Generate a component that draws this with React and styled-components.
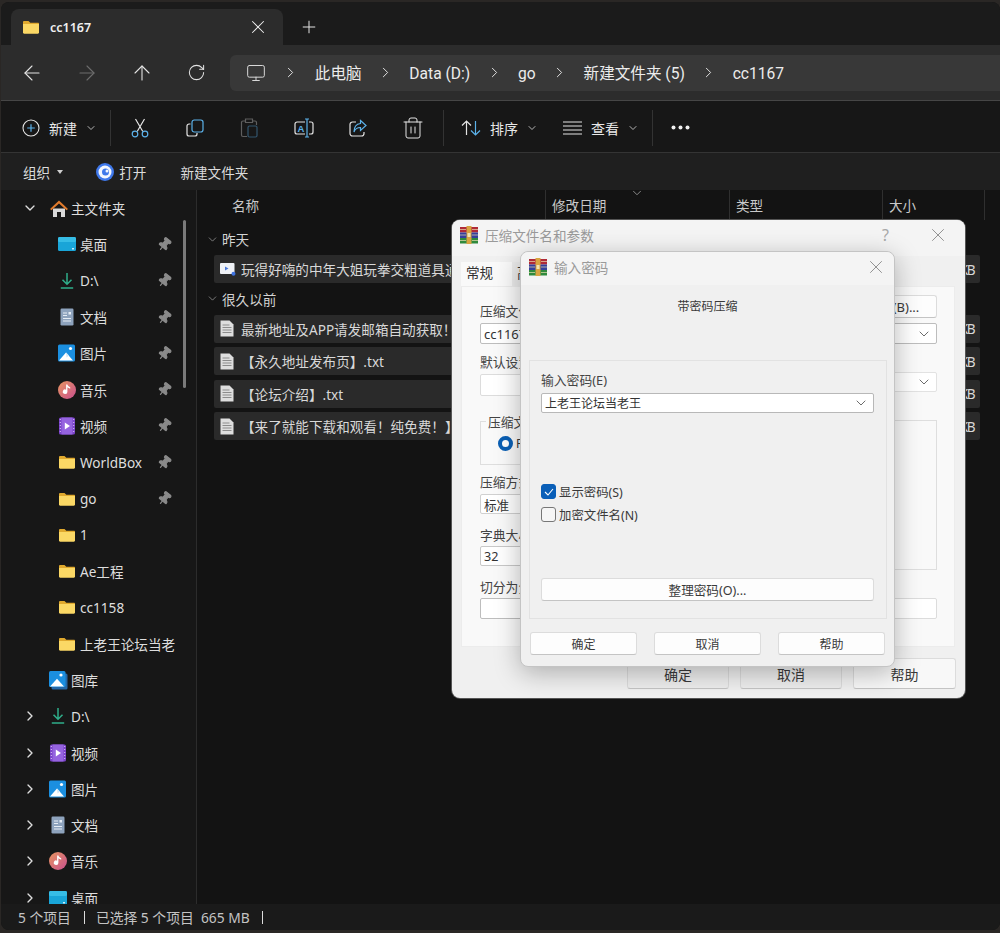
import { Fragment } from "react";
import styled, { createGlobalStyle } from "styled-components";
import {
  ArrowLeft,
  ArrowRight,
  ArrowUp,
  ChevronDown,
  ChevronRight,
  Monitor,
  Pin,
  Plus,
  RotateCw,
  Trash2,
  X,
} from "lucide-react";

const GlobalStyle = createGlobalStyle`
  html, body {
    margin: 0;
    background: #2a2725;
    font-family: "Noto Sans", "Noto Sans CJK SC", sans-serif;
  }
  * { box-sizing: border-box; }
`;

const Page = styled.div`
  width: 1000px;
  height: 933px;
  padding: 2px 0 0 1px;
  overflow: hidden;
`;
const Window = styled.div`
  position: relative;
  width: 999px;
  height: 928px;
  display: flex;
  flex-direction: column;
  border-radius: 8px;
  overflow: hidden;
  background: #141414;
  color: #e4e4e4;
`;

/* tabs */
const TabStrip = styled.div`
  height: 43px;
  flex: none;
  display: flex;
  align-items: flex-end;
  padding-left: 10px;
  background: #1b1b1b;
`;
const Tab = styled.div`
  width: 272px;
  height: 36px;
  display: flex;
  align-items: center;
  padding: 0 14px 0 11px;
  background: #2c2c2c;
  border-radius: 8px 8px 0 0;
  font-size: 12.5px;
  font-weight: 600;
  color: #f0f0f0;
`;
const TabTitle = styled.span`
  flex: 1;
  margin-left: 10px;
`;
const NewTab = styled.div`
  width: 52px;
  height: 36px;
  display: flex;
  align-items: center;
  justify-content: center;
`;

/* address row */
const AddressRow = styled.div`
  height: 56px;
  flex: none;
  display: flex;
  align-items: center;
  background: #2c2c2c;
  border-bottom: 1px solid #464646;
`;
const NavButton = styled.div`
  width: 55px;
  height: 32px;
  flex: none;
  display: flex;
  align-items: center;
  justify-content: center;
  color: ${(p) => (p.$disabled ? "#6c6c6c" : "#e2e2e2")};
`;
const NavGroup = styled.div`
  display: flex;
  padding-left: 3px;
  margin-right: 6px;
`;
const AddressField = styled.div`
  flex: 1;
  height: 36px;
  display: flex;
  align-items: center;
  gap: 15.4px;
  padding-left: 14px;
  background: #383838;
  border-radius: 6px 0 0 6px;
  font-family: Roboto, "Noto Sans CJK SC", sans-serif;
  font-size: 15.6px;
  color: #ececec;
`;
const Crumb = styled.span`
  display: block;
  line-height: 20px;
  height: 20px;
  padding-top: 1px;
`;
const CrumbIcon = styled.div`
  width: 23px;
  display: flex;
  justify-content: center;
  color: #d8d8d8;
`;
const CrumbSep = styled(ChevronRight)`
  width: 17px;
  height: 19px;
  flex: none;
`;

/* command bar */
const CommandBar = styled.div`
  height: 52px;
  flex: none;
  display: flex;
  align-items: center;
  padding: 2px 0 0 21px;
  background: #171717;
  border-bottom: 1px solid #343434;
  font-size: 14px;
`;
const CommandLabel = styled.div`
  display: flex;
  align-items: center;
  gap: 9px;
  width: ${(p) => p.$width}px;
  color: #e8e8e8;
`;
const SmallChevron = styled(ChevronDown)`
  width: 12px;
  height: 12px;
  color: #b4b4b4;
  margin-left: -1px;
`;
const CommandDivider = styled.div`
  width: 1px;
  height: 36px;
  margin: 0 ${(p) => p.$right || 0}px 0 ${(p) => p.$left || 0}px;
  background: #333;
`;
const IconButton = styled.div`
  width: 54.5px;
  display: flex;
  justify-content: center;
`;

/* secondary toolbar */
const SubBar = styled.div`
  height: 37px;
  flex: none;
  display: flex;
  align-items: center;
  padding-left: 22px;
  background: #1f1f1f;
  font-size: 13.6px;
  color: #dcdcdc;
`;
const SubItem = styled.div`
  display: flex;
  align-items: center;
  gap: 5px;
  margin-right: ${(p) => p.$gap}px;
`;
const Caret = styled.span`
  width: 0;
  height: 0;
  margin-left: 2px;
  border-left: 3.5px solid transparent;
  border-right: 3.5px solid transparent;
  border-top: 4px solid #cfcfcf;
`;

/* explorer body */
const Body = styled.div`
  flex: 1;
  min-height: 0;
  display: flex;
`;
const Sidebar = styled.div`
  position: relative;
  width: 196px;
  flex: none;
  overflow: hidden;
  background: #171717;
  border-right: 1px solid #2c2c2c;
`;
const Scrollbar = styled.div`
  position: absolute;
  top: 30px;
  left: 182px;
  width: 3px;
  height: 168px;
  border-radius: 2px;
  background: #7a7a7a;
`;
const NavRow = styled.div`
  height: 36.3px;
  display: flex;
  align-items: center;
  padding-left: ${(p) => (p.$child ? 57 : 21)}px;
  font-size: 13.6px;
  color: #dedede;
  white-space: nowrap;
`;
const NavChevron = styled.div`
  width: 27px;
  flex: none;
  display: flex;
  color: #dedede;
`;
const NavIcon = styled.div`
  width: 18px;
  height: 18px;
  flex: none;
  margin-right: 4px;
`;
const NavText = styled.span`
  flex: 1;
`;
const PinSlot = styled.div`
  width: 39px;
  display: flex;
  color: #8a8a8a;
  svg {
    transform: rotate(40deg);
  }
`;

const Main = styled.div`
  flex: 1;
  min-width: 0;
  position: relative;
  background: #131313;
`;
const ColumnHeader = styled.div`
  height: 32px;
  display: flex;
  font-size: 13.6px;
  color: #c9c9c9;
`;
const Column = styled.div`
  width: ${(p) => p.$width}px;
  height: 30px;
  padding: 5px 0 0 ${(p) => p.$pad || 6}px;
  border-right: 1px solid #2f2f2f;
`;
const SortMark = styled(ChevronDown)`
  position: absolute;
  top: -4px;
  left: 433px;
  width: 14px;
  height: 14px;
  color: #a0a0a0;
`;
const GroupLabel = styled.div`
  height: 26px;
  display: flex;
  align-items: center;
  gap: 3px;
  margin: ${(p) => p.$top}px 0 ${(p) => p.$bottom}px 9px;
  font-size: 13.6px;
  color: #d4d4d4;
`;
const GroupChevron = styled(ChevronDown)`
  width: 13px;
  height: 13px;
  color: #9a9a9a;
`;
const FileRow = styled.div`
  width: 766px;
  height: 28px;
  margin: 0 0 4.5px 17px;
  display: flex;
  align-items: center;
  padding: 0 6px 0 6px;
  background: #2a2a2a;
  border-radius: 2px;
  font-size: 13.6px;
  color: #d8d8d8;
  white-space: nowrap;
`;
const FileIconSlot = styled.div`
  width: 14px;
  flex: none;
  display: flex;
`;
const FileName = styled.span`
  flex: 1;
  margin-left: 7px;
  overflow: hidden;
`;
const FileSize = styled.span`
  letter-spacing: -1.5px;
`;

const StatusBar = styled.div`
  height: 26px;
  flex: none;
  display: flex;
  align-items: center;
  padding-left: 17px;
  background: #1a1a1a;
  font-size: 13.8px;
  color: #c4c4c4;
  white-space: pre;
`;
const StatusDivider = styled.span`
  width: 1px;
  height: 13px;
  margin: 0 ${(p) => p.$right}px 0 ${(p) => p.$left}px;
  background: #dcdcdc;
`;

/* dialogs */
const Dialog = styled.div`
  position: absolute;
  display: flex;
  flex-direction: column;
  border-radius: 8px;
  background: #f0f0f0;
  color: #3a3a3a;
`;
const ArchiveDialog = styled(Dialog)`
  top: 218px;
  left: 451px;
  width: 513px;
  height: 478px;
  box-shadow: 0 0 0 1px #555;
`;
const PasswordDialog = styled(Dialog)`
  top: 249px;
  left: 519px;
  width: 375px;
  height: 416px;
  border: 1px solid #c4c4c4;
  box-shadow: 0 6px 26px rgba(0, 0, 0, 0.28);
`;
const TitleBar = styled.div`
  height: ${(p) => p.$height}px;
  flex: none;
  display: flex;
  align-items: center;
  padding: 0 ${(p) => p.$right}px ${(p) => p.$bottom}px ${(p) => p.$left}px;
  background: #f4f4f4;
  border-radius: 8px 8px 0 0;
  font-size: 13.6px;
  color: #9a9a9a;
`;
const TitleText = styled.span`
  flex: 1;
  margin-left: 7px;
`;
const HelpMark = styled.span`
  margin-right: 38px;
  color: #a8a8a8;
  font-size: 16px;
`;
const TabRow = styled.div`
  height: 24px;
  margin: 6px 0 0 9px;
  display: flex;
`;
const DialogTab = styled.div`
  padding: 0 0 0 5px;
  font-size: 13.6px;
  width: ${(p) => p.$width}px;
  background: ${(p) => (p.$active ? "#f9f9f9" : "#ececec")};
  color: #333;
`;
const Panel = styled.div`
  height: 361px;
  margin: 0 10px 0 9px;
  display: flex;
  justify-content: space-between;
  padding: 0 17px 0 18px;
  background: #f9f9f9;
  border: 1px solid #ececec;
`;
const PanelColumn = styled.div`
  width: ${(p) => p.$width}px;
  display: flex;
  flex-direction: column;
  padding-top: ${(p) => p.$top}px;
`;
const FieldLabel = styled.div`
  height: 18px;
  margin-top: ${(p) => p.$top || 0}px;
  font-size: 12.8px;
  line-height: 17px;
  color: #444;
  white-space: nowrap;
`;
const Field = styled.div`
  height: ${(p) => p.$height || 21}px;
  margin-top: ${(p) => p.$top || 2}px;
  display: flex;
  align-items: center;
  justify-content: space-between;
  padding: 0 4px 0 3px;
  background: #fff;
  border: 1px solid ${(p) => p.$border || "#bdbdbd"};
  border-radius: 2px;
  font-size: ${(p) => p.$size || 12.6}px;
  color: #333;
`;
const FieldChevron = styled(ChevronDown).attrs({ strokeWidth: 1.3 })`
  width: 16px;
  height: 16px;
  color: #555;
`;
const LegendBox = styled.div`
  position: relative;
  height: ${(p) => p.$height}px;
  margin-top: ${(p) => p.$top}px;
  border: 1px solid #dedede;
`;
const Legend = styled.span`
  position: absolute;
  top: -10px;
  left: 5px;
  padding: 0 2px;
  background: #f9f9f9;
  font-size: 12.8px;
  color: #444;
  white-space: nowrap;
`;
const RadioRow = styled.div`
  display: flex;
  align-items: center;
  gap: 3px;
  padding: 13px 0 0 17px;
  font-size: 12px;
`;
const Radio = styled.span`
  width: 15px;
  height: 15px;
  flex: none;
  border-radius: 50%;
  border: 4.5px solid #0a5fb4;
  background: #fff;
`;
const WideButton = styled.div`
  width: ${(p) => (p.$width ? `${p.$width}px` : "auto")};
  height: ${(p) => p.$height}px;
  margin-top: ${(p) => p.$top || 0}px;
  align-self: ${(p) => p.$align || "auto"};
  display: flex;
  align-items: center;
  justify-content: center;
  background: ${(p) => p.$bg || "#fdfdfd"};
  border: 1px solid #dcdcdc;
  border-bottom-color: #c4c4c4;
  border-radius: 3px;
  font-size: ${(p) => p.$size || 12}px;
  color: #3a3a3a;
`;
const DialogFooter = styled.div`
  display: flex;
  justify-content: flex-end;
  gap: 11px;
  padding: 11px 9px 0 0;
`;
const Caption = styled.div`
  height: 18px;
  margin-top: 13px;
  text-align: center;
  font-size: 12px;
  line-height: 18px;
  color: #3a3a3a;
`;
const PasswordGroup = styled.div`
  height: 259px;
  margin: 44px 7px 0 8px;
  display: flex;
  flex-direction: column;
  padding: 11px 12px 17px 11px;
  border: 1px solid #e2e2e2;
`;
const CheckRow = styled.div`
  display: flex;
  align-items: center;
  gap: 3px;
  height: 15px;
  margin-top: ${(p) => p.$top}px;
  font-size: 12.4px;
  color: #3a3a3a;
`;
const CheckBox = styled.span`
  width: 15px;
  height: 15px;
  flex: none;
  display: flex;
  align-items: center;
  justify-content: center;
  border-radius: 3px;
  background: ${(p) => (p.$checked ? "#0a5fb8" : "#f6f6f6")};
  border: 1px solid ${(p) => (p.$checked ? "#0a5fb8" : "#777")};
`;
const PasswordFooter = styled.div`
  display: flex;
  justify-content: space-between;
  padding: 13px 9px 0 9px;
`;

/* drawn icons */
const FolderIcon = () => (
  <svg width="18" height="18" viewBox="0 0 18 18">
    <path d="M1 4.200C1 3.500 1.500 3 2.200 3h4.300l1.800 1.800H16c.6 0 1 .4 1 1V6H1z" fill="#e0a92e" />
    <path d="M1 6h16v8.600c0 .7-.5 1.200-1.200 1.200H2.200C1.500 15.800 1 15.300 1 14.600z" fill="#fbd865" />
  </svg>
);
const HomeIcon = () => (
  <svg width="20" height="20" viewBox="0 0 20 20">
    <path d="M4 9.500h12V18H12v-5H8v5H4z" fill="#d9d9d9" />
    <path d="M10 1.500 19 10l-1.500 1.300L10 4.500 2.500 11.300 1 10z" fill="#e07a2c" />
  </svg>
);
const DesktopIcon = () => (
  <svg width="18" height="18" viewBox="0 0 18 18">
    <rect y="2" width="18" height="14" rx="1.500" fill="#19a5d8" />
    <rect y="2" width="18" height="5" rx="1.500" fill="#36bde6" />
    <rect x="14" y="13" width="2" height="1.500" fill="#c9eefa" />
  </svg>
);
const DownloadIcon = () => (
  <svg width="18" height="18" viewBox="0 0 18 18" fill="none" stroke="#2fae8a" strokeWidth="1.500">
    <path d="M9 1v11M4.500 7.800 9 12.300l4.500-4.500M2.800 16h12.400" />
  </svg>
);
const DocIcon = () => (
  <svg width="18" height="18" viewBox="0 0 18 18">
    <rect x="2.500" y="0.500" width="13" height="17" rx="1.200" fill="#8ea3bd" />
    <path d="M5 5h4M5 7.500h4M5 10.500h8M5 13h8" stroke="#e6edf5" strokeWidth="1" />
    <rect x="10.500" y="4" width="2.500" height="2.500" fill="#e6edf5" />
  </svg>
);
const PictureIcon = () => (
  <svg width="18" height="18" viewBox="0 0 18 18">
    <rect width="17" height="17" y="0.500" rx="1.500" fill="#1b8fe0" />
    <circle cx="12.500" cy="4.500" r="1.600" fill="#fff" />
    <path d="M1 16.500 8 8.500l7 8z" fill="#fff" />
    <path d="M8 8.500l3 3-2.500 2z" fill="#cfe6f8" />
  </svg>
);
const MusicIcon = () => (
  <svg width="18" height="18" viewBox="0 0 18 18">
    <defs>
      <linearGradient id="music" x1="0" y1="0" x2="1" y2="1">
        <stop offset="0" stopColor="#e89560" />
        <stop offset="1" stopColor="#c9508f" />
      </linearGradient>
    </defs>
    <circle cx="9" cy="9" r="9" fill="url(#music)" />
    <path d="M9.400 3.500v7.200a2.300 2.300 0 1 1-1.300-2V3.500zM9.400 3.500c.4 1.800 1.800 2 2.800 2.800v1.500c-1-.6-2.100-.9-2.800-1.500z" fill="#fff" />
  </svg>
);
const VideoIcon = () => (
  <svg width="18" height="18" viewBox="0 0 18 18">
    <rect x="1" y="0.500" width="16" height="17" rx="1.500" fill="#7a42c9" />
    <rect x="3.500" y="0.500" width="11" height="17" fill="#9563df" />
    <path d="M1.800 2.500h1M1.800 5.500h1M1.800 8.500h1M1.800 11.500h1M1.800 14.500h1M15.200 2.500h1M15.200 5.500h1M15.200 8.500h1M15.200 11.500h1M15.200 14.500h1" stroke="#d9c6f5" strokeWidth="1.200" />
    <path d="M6.800 5.500 12 9l-5.200 3.500z" fill="#fff" />
  </svg>
);
const GalleryIcon = () => (
  <svg width="19" height="19" viewBox="0 0 19 19">
    <rect x="2.500" y="2.500" width="16" height="16" rx="1.500" fill="#2468a8" />
    <rect width="16.500" height="16" rx="1.500" fill="#1b8fe0" />
    <circle cx="12" cy="4" r="1.600" fill="#fff" />
    <path d="M1 15.500 8 7.800l7 7.700z" fill="#fff" />
  </svg>
);
const TextFileIcon = () => (
  <svg width="14" height="17" viewBox="0 0 14 17">
    <path d="M.5.500h9l4 4v12H.500z" fill="#dedede" />
    <path d="M2.500 5h7M2.500 7.500h9M2.500 10h9M2.500 12.500h9" stroke="#8c8c8c" strokeWidth="1" />
  </svg>
);
const VideoFileIcon = () => (
  <svg width="16" height="15" viewBox="0 0 16 15" style={{ flex: "none" }}>
    <rect y="1" width="14.500" height="11" rx="1" fill="#eef1f6" />
    <path d="M5 4.500 8.500 6.500 5 8.500z" fill="#4a78d8" />
    <circle cx="13.500" cy="11.800" r="2" fill="#3f73e0" />
  </svg>
);
const RarIcon = () => (
  <svg width="18" height="18" viewBox="0 0 18 18">
    <rect y="1" width="18" height="5.500" fill="#b02a37" />
    <rect y="6.500" width="18" height="5.500" fill="#34409c" />
    <rect y="12" width="18" height="5.500" fill="#2f8a3c" />
    <rect x="6.500" y="0" width="5" height="18" fill="#d9a441" />
    <rect x="7.500" y="7" width="3" height="4" fill="#f3e3b0" />
    <path d="M0 3.500h6M12 3.500h6M0 9h6M12 9h6M0 14.500h6M12 14.500h6" stroke="#e8dcb0" strokeWidth=".7" />
  </svg>
);
const NewCircleIcon = () => (
  <svg width="18" height="18" viewBox="0 0 18 18" fill="none">
    <circle cx="9" cy="9" r="8" stroke="#e4e4e4" strokeWidth="1.100" />
    <path d="M9 5.200v7.600M5.200 9h7.600" stroke="#5cb2ea" strokeWidth="1.200" />
  </svg>
);
const ScissorsIcon = () => (
  <svg width="18" height="20" viewBox="0 0 18 20" fill="none" strokeWidth="1.200">
    <path d="M4.500 1 11.800 13.500M13.500 1 6.200 13.500" stroke="#e4e4e4" />
    <circle cx="4" cy="16" r="2.800" stroke="#5cb2ea" />
    <circle cx="14" cy="16" r="2.800" stroke="#5cb2ea" />
  </svg>
);
const CopyIcon = () => (
  <svg width="18" height="18" viewBox="0 0 18 18" fill="none" strokeWidth="1.200">
    <path d="M4.500 5H3a2 2 0 0 0-2 2v8a2 2 0 0 0 2 2h6a2 2 0 0 0 2-2v-1" stroke="#e4e4e4" />
    <rect x="6" y="1" width="11" height="12" rx="2.200" stroke="#5cb2ea" />
  </svg>
);
const PasteIcon = () => (
  <svg width="18" height="20" viewBox="0 0 18 20" fill="none" strokeWidth="1.200">
    <path d="M5 3H3a1.500 1.500 0 0 0-1.500 1.500V17A1.500 1.500 0 0 0 3 18.500h4M13 3h2a1.500 1.500 0 0 1 1.500 1.500V7M5.500 1h7v3.500h-7z" stroke="#5f5f5f" />
    <rect x="8" y="8" width="9" height="11" rx="1.500" stroke="#33566e" />
  </svg>
);
const RenameIcon = () => (
  <svg width="20" height="20" viewBox="0 0 20 20" fill="none" strokeWidth="1.200">
    <path d="M11 4H3a2 2 0 0 0-2 2v8a2 2 0 0 0 2 2h8M15 4h2a2 2 0 0 1 2 2v8a2 2 0 0 1-2 2h-2" stroke="#e4e4e4" />
    <path d="M11 1h4M13 1v18M11 19h4" stroke="#5cb2ea" />
    <text x="3.500" y="13.500" fontSize="9.500" fontWeight="700" fill="#5cb2ea" fontFamily="Liberation Sans, sans-serif">A</text>
  </svg>
);
const ShareIcon = () => (
  <svg width="18" height="18" viewBox="0 0 18 18" fill="none" strokeWidth="1.200">
    <path d="M7 3H3.500A2.500 2.500 0 0 0 1 5.500v9A2.500 2.500 0 0 0 3.500 17h9a2.500 2.500 0 0 0 2.500-2.500V13" stroke="#e4e4e4" />
    <path d="M11.500 1.500 17 6.500 11.500 11.500V8.500C8 8.500 6 10 5 13c0-5 2-8 6.500-8.500z" stroke="#5cb2ea" />
  </svg>
);
const SortIcon = () => (
  <svg width="20" height="18" viewBox="0 0 20 18" fill="none" strokeWidth="1.200">
    <path d="M5.500 16V2M1 6.500 5.500 2 10 6.500" stroke="#e4e4e4" />
    <path d="M14.500 2v14M10 11.500 14.500 16l4.500-4.500" stroke="#5cb2ea" />
  </svg>
);
const ViewIcon = () => (
  <svg width="19" height="14" viewBox="0 0 19 14" stroke="#e4e4e4" strokeWidth="1.100">
    <path d="M0 1h19M0 5h19M0 9h19M0 13h19" />
  </svg>
);
const DotsIcon = () => (
  <svg width="19" height="5" viewBox="0 0 19 5" fill="#f0f0f0">
    <circle cx="2.500" cy="2.500" r="2" />
    <circle cx="9.500" cy="2.500" r="2" />
    <circle cx="16.500" cy="2.500" r="2" />
  </svg>
);
const OpenIcon = () => (
  <svg width="18" height="18" viewBox="0 0 18 18">
    <circle cx="9" cy="9" r="9" fill="#3f78ea" />
    <circle cx="9" cy="9" r="6.500" fill="#f3f6fd" />
    <circle cx="9.500" cy="9" r="3.500" fill="#3f78ea" />
    <circle cx="11" cy="8" r="1.500" fill="#f3f6fd" />
  </svg>
);

const quickAccess = [
  { name: "桌面", icon: DesktopIcon, pinned: true },
  { name: "D:\\", icon: DownloadIcon, pinned: true },
  { name: "文档", icon: DocIcon, pinned: true },
  { name: "图片", icon: PictureIcon, pinned: true },
  { name: "音乐", icon: MusicIcon, pinned: true },
  { name: "视频", icon: VideoIcon, pinned: true },
  { name: "WorldBox", icon: FolderIcon, pinned: true },
  { name: "go", icon: FolderIcon, pinned: true },
  { name: "1", icon: FolderIcon },
  { name: "Ae工程", icon: FolderIcon },
  { name: "cc1158", icon: FolderIcon },
  { name: "上老王论坛当老", icon: FolderIcon },
];

const libraries = [
  { name: "D:\\", icon: DownloadIcon },
  { name: "视频", icon: VideoIcon },
  { name: "图片", icon: PictureIcon },
  { name: "文档", icon: DocIcon },
  { name: "音乐", icon: MusicIcon },
  { name: "桌面", icon: DesktopIcon },
];

const oldFiles = [
  "最新地址及APP请发邮箱自动获取！",
  "【永久地址发布页】.txt",
  "【论坛介绍】.txt",
  "【来了就能下载和观看！纯免费！】",
];

const crumbs = ["此电脑", "Data (D:)", "go", "新建文件夹 (5)", "cc1167"];

export default function App() {
  return (
    <Page>
      <GlobalStyle />
      <Window>
        <TabStrip>
          <Tab>
            <FolderIcon />
            <TabTitle>cc1167</TabTitle>
            <X size={22} strokeWidth={1.1} />
          </Tab>
          <NewTab>
            <Plus size={20} strokeWidth={1.2} />
          </NewTab>
        </TabStrip>

        <AddressRow>
          <NavGroup>
            <NavButton>
              <ArrowLeft size={24} strokeWidth={1.1} />
            </NavButton>
            <NavButton $disabled>
              <ArrowRight size={24} strokeWidth={1.1} />
            </NavButton>
            <NavButton>
              <ArrowUp size={24} strokeWidth={1.1} />
            </NavButton>
            <NavButton>
              <RotateCw size={19} strokeWidth={1.3} />
            </NavButton>
          </NavGroup>
          <AddressField>
            <CrumbIcon>
              <Monitor size={20} strokeWidth={1.2} />
            </CrumbIcon>
            {crumbs.map((crumb) => (
              <Fragment key={crumb}>
                <CrumbSep strokeWidth={1.3} />
                <Crumb>{crumb}</Crumb>
              </Fragment>
            ))}
          </AddressField>
        </AddressRow>

        <CommandBar>
          <CommandLabel $width={88}>
            <NewCircleIcon />
            <span>新建</span>
            <SmallChevron />
          </CommandLabel>
          <CommandDivider $right={2} />
          <IconButton>
            <ScissorsIcon />
          </IconButton>
          <IconButton>
            <CopyIcon />
          </IconButton>
          <IconButton>
            <PasteIcon />
          </IconButton>
          <IconButton>
            <RenameIcon />
          </IconButton>
          <IconButton>
            <ShareIcon />
          </IconButton>
          <IconButton>
            <Trash2 size={24} strokeWidth={1} />
          </IconButton>
          <CommandDivider $left={3} $right={17} />
          <CommandLabel $width={102}>
            <SortIcon />
            <span>排序</span>
            <SmallChevron />
          </CommandLabel>
          <CommandLabel $width={89}>
            <ViewIcon />
            <span>查看</span>
            <SmallChevron />
          </CommandLabel>
          <CommandDivider $right={18} />
          <DotsIcon />
        </CommandBar>

        <SubBar>
          <SubItem $gap={33}>
            <span>组织</span>
            <Caret />
          </SubItem>
          <SubItem $gap={34}>
            <OpenIcon />
            <span>打开</span>
          </SubItem>
          <SubItem>新建文件夹</SubItem>
        </SubBar>

        <Body>
          <Sidebar>
            <NavRow>
              <NavChevron>
                <ChevronDown size={16} strokeWidth={2} />
              </NavChevron>
              <NavIcon>
                <HomeIcon />
              </NavIcon>
              <NavText>主文件夹</NavText>
            </NavRow>
            {quickAccess.map((item) => (
              <NavRow $child key={item.name}>
                <NavIcon>
                  <item.icon />
                </NavIcon>
                <NavText>{item.name}</NavText>
                {item.pinned && (
                  <PinSlot>
                    <Pin size={15} fill="currentColor" />
                  </PinSlot>
                )}
              </NavRow>
            ))}
            <NavRow>
              <NavChevron />
              <NavIcon>
                <GalleryIcon />
              </NavIcon>
              <NavText>图库</NavText>
            </NavRow>
            {libraries.map((item) => (
              <NavRow key={`lib-${item.name}`}>
                <NavChevron>
                  <ChevronRight size={16} strokeWidth={2} />
                </NavChevron>
                <NavIcon>
                  <item.icon />
                </NavIcon>
                <NavText>{item.name}</NavText>
              </NavRow>
            ))}
            <Scrollbar />
          </Sidebar>

          <Main>
            <ColumnHeader>
              <Column $width={349} $pad={35}>
                名称
              </Column>
              <Column $width={184}>修改日期</Column>
              <Column $width={153}>类型</Column>
              <Column $width={102}>大小</Column>
              <SortMark strokeWidth={1.4} />
            </ColumnHeader>
            <GroupLabel $top={4} $bottom={3}>
              <GroupChevron strokeWidth={1.4} />
              昨天
            </GroupLabel>
            <FileRow>
              <FileIconSlot>
                <VideoFileIcon />
              </FileIconSlot>
              <FileName>玩得好嗨的中年大姐玩拳交粗道具通</FileName>
              <FileSize>KB</FileSize>
            </FileRow>
            <GroupLabel $top={-2} $bottom={3}>
              <GroupChevron strokeWidth={1.4} />
              很久以前
            </GroupLabel>
            {oldFiles.map((file) => (
              <FileRow key={file}>
                <FileIconSlot>
                  <TextFileIcon />
                </FileIconSlot>
                <FileName>{file}</FileName>
                <FileSize>KB</FileSize>
              </FileRow>
            ))}
          </Main>
        </Body>

        <StatusBar>
          5 个项目
          <StatusDivider $left={13} $right={11} />
          已选择 5 个项目  665 MB
          <StatusDivider $left={12} $right={0} />
        </StatusBar>

        <ArchiveDialog>
          <TitleBar $height={36} $left={8} $right={16} $bottom={6}>
            <RarIcon />
            <TitleText>压缩文件名和参数</TitleText>
            <HelpMark>?</HelpMark>
            <X size={22} strokeWidth={1} color="#8a8a8a" />
          </TitleBar>
          <TabRow>
            <DialogTab $active $width={51}>
              常规
            </DialogTab>
            <DialogTab $width={60}>高级</DialogTab>
          </TabRow>
          <Panel>
            <PanelColumn $width={200} $top={16}>
              <FieldLabel>压缩文件名(A)</FieldLabel>
              <Field $size={13}>cc1167</Field>
              <FieldLabel $top={10}>默认设置</FieldLabel>
              <Field $height={22} $border="#dcdcdc" />
              <LegendBox $height={44} $top={25}>
                <Legend>压缩文件格式</Legend>
                <RadioRow>
                  <Radio />
                  RAR
                </RadioRow>
              </LegendBox>
              <FieldLabel $top={9}>压缩方式(C)</FieldLabel>
              <Field $height={20} $border="#d0d0d0">
                标准
              </Field>
              <FieldLabel $top={13}>字典大小(I)</FieldLabel>
              <Field $height={20} $top={1} $border="#c8c8c8">
                32
              </Field>
              <FieldLabel $top={13}>切分为分卷(V)</FieldLabel>
              <Field $height={21} $top={1} />
            </PanelColumn>
            <PanelColumn $width={237} $top={8}>
              <WideButton $width={88} $height={23} $align="flex-end" $size={13}>
                浏览(B)...
              </WideButton>
              <Field $height={21} $top={5}>
                <span />
                <FieldChevron />
              </Field>
              <Field $height={20} $top={28} $border="#e2e2e2">
                <span />
                <FieldChevron />
              </Field>
              <LegendBox $height={150} $top={28} />
              <Field $height={21} $top={28} $border="#dcdcdc" />
            </PanelColumn>
          </Panel>
          <DialogFooter>
            <WideButton $width={102} $height={31} $size={14} $bg="#eeeeee">
              确定
            </WideButton>
            <WideButton $width={102} $height={31} $size={14} $bg="#eeeeee">
              取消
            </WideButton>
            <WideButton $width={103} $height={31} $size={14} $bg="#f8f8f8">
              帮助
            </WideButton>
          </DialogFooter>
        </ArchiveDialog>

        <PasswordDialog>
          <TitleBar $height={33} $left={8} $right={7} $bottom={3}>
            <RarIcon />
            <TitleText>输入密码</TitleText>
            <X size={22} strokeWidth={1} color="#8a8a8a" />
          </TitleBar>
          <Caption>带密码压缩</Caption>
          <PasswordGroup>
            <FieldLabel>输入密码(E)</FieldLabel>
            <Field $height={21} $top={3} $border="#b8b8b8" $size={12}>
              上老王论坛当老王
              <FieldChevron />
            </Field>
            <CheckRow $top={71}>
              <CheckBox $checked>
                <svg width="10" height="8" viewBox="0 0 10 8" fill="none" stroke="#fff" strokeWidth="1.100">
                  <path d="M1 4l3 3 5-6" />
                </svg>
              </CheckBox>
              显示密码(S)
            </CheckRow>
            <CheckRow $top={8}>
              <CheckBox />
              加密文件名(N)
            </CheckRow>
            <WideButton $height={23} $top={56} $size={12.6}>
              整理密码(O)...
            </WideButton>
          </PasswordGroup>
          <PasswordFooter>
            <WideButton $width={107} $height={23}>
              确定
            </WideButton>
            <WideButton $width={107} $height={23}>
              取消
            </WideButton>
            <WideButton $width={107} $height={23}>
              帮助
            </WideButton>
          </PasswordFooter>
        </PasswordDialog>
      </Window>
    </Page>
  );
}
